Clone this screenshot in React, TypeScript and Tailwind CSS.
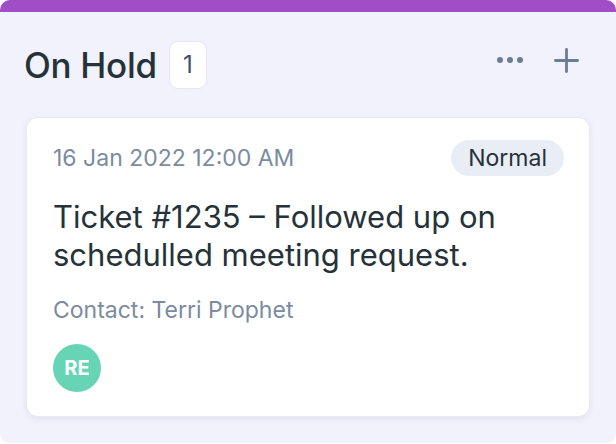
import React from "react";

function Dots() {
  return (
    <svg width="28" height="8" viewBox="0 0 28 8" fill="#6b7d93">
      <circle cx="4" cy="4" r="3" />
      <circle cx="14" cy="4" r="3" />
      <circle cx="24" cy="4" r="3" />
    </svg>
  );
}

function Plus() {
  return (
    <svg width="25" height="25" viewBox="0 0 25 25" stroke="#6b7d93" strokeWidth="2.8" strokeLinecap="round">
      <line x1="12.5" y1="1.5" x2="12.5" y2="23.5" />
      <line x1="1.5" y1="12.5" x2="23.5" y2="12.5" />
    </svg>
  );
}

export default function App() {
  return (
    <div className="w-[616px] h-[444px] bg-white" style={{ fontFamily: "Inter, 'Noto Sans', sans-serif" }}>
      <div className="w-full h-[443px] flex flex-col bg-[#f1f2fb] rounded-[10px] overflow-hidden">
        <div className="h-[12px] bg-[#a04ec6] shrink-0" />
        <div className="flex items-center justify-between pl-[24px] pr-[37px] pt-[29px] pb-[28px]">
          <div className="flex items-center gap-[12px]">
            <h2 className="text-[35px] leading-[40px] font-medium text-[#26323a] tracking-[-0.3px]">On Hold</h2>
            <span className="w-[38px] h-[48px] flex items-center justify-center bg-white border border-[#e6e8f0] rounded-[9px] text-[24px] text-[#3d5068]">
              1
            </span>
          </div>
          <div className="flex items-center gap-[30px] mb-[10px]">
            <Dots />
            <Plus />
          </div>
        </div>
        <div className="mx-[26px] bg-white rounded-[12px] border border-[#e8eaf1] shadow-[0_2px_6px_rgba(30,40,90,0.08)] pl-[26px] pr-[25px] pt-[22px] pb-[24px]">
          <div className="flex items-center justify-between h-[36px]">
            <span className="text-[23px] leading-[28px] text-[#7b8ba0]">16 Jan 2022 12:00 AM</span>
            <span className="h-[36px] px-[17px] flex items-center rounded-full bg-[#e9edf5] text-[23px] text-[#26323a]">
              Normal
            </span>
          </div>
          <p className="mt-[22px] text-[31px] leading-[38px] text-[#26323a]">
            Ticket #1235 – Followed up on
            <br />
            schedulled meeting request.
          </p>
          <p className="mt-[22px] text-[23px] leading-[28px] text-[#7b8ba0]">Contact: Terri Prophet</p>
          <div className="mt-[20px] w-[48px] h-[48px] rounded-full bg-[#67d5b5] flex items-center justify-center text-white text-[20px] font-bold">
            RE
          </div>
        </div>
      </div>
    </div>
  );
}
